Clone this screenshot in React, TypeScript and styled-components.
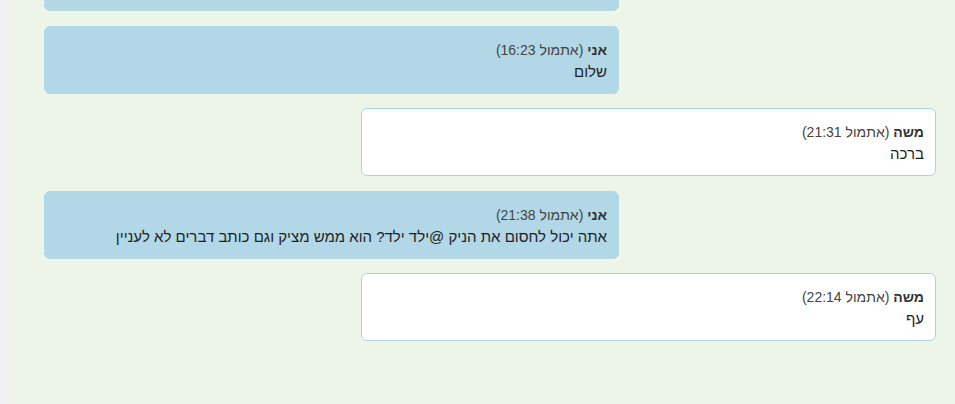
import React from 'react';
import styled, { createGlobalStyle } from 'styled-components';

const GlobalStyle = createGlobalStyle`
  html, body {
    margin: 0;
    padding: 0;
    height: 100%;
    overflow: hidden;
  }
  body {
    font-family: "Liberation Sans", Arial, sans-serif;
    background: #edf5e8;
  }
`;

const Page = styled.div`
  display: flex;
  height: 100vh;
`;

const SideStrip = styled.div`
  flex: 0 0 13px;
  background: linear-gradient(to right, #f1f1f1 75%, #edf5e8);
`;

const ChatArea = styled.div`
  flex: 1;
  display: flex;
  flex-direction: column;
  justify-content: flex-end;
  gap: 14.5px;
  padding: 0 19px 63px 31px;
  overflow: hidden;
  direction: rtl;
`;

// mine = blue on the left, others = white on the right
const Bubble = styled.div<{ $mine?: boolean }>`
  box-sizing: border-box;
  flex: 0 0 auto;
  width: 575px;
  height: 68px;
  padding: 13px 11px 12px;
  border-radius: 6px;
  align-self: ${(p) => (p.$mine ? 'flex-end' : 'flex-start')};
  background: ${(p) => (p.$mine ? '#b2d7e6' : '#ffffff')};
  border: 1px solid ${(p) => (p.$mine ? '#b2d7e6' : '#a9d3e6')};
  color: #222;
`;

const Header = styled.div`
  font-size: 14px;
  line-height: 21px;
  color: #444;
  b {
    color: #333;
  }
`;

const Text = styled.div`
  font-size: 15px;
  line-height: 22px;
  color: #1e1e1e;
`;

type Msg = { mine: boolean; name: string; time: string; text: string };

const messages: Msg[] = [
  { mine: true, name: 'אני', time: 'אתמול 16:20', text: 'היי' },
  { mine: true, name: 'אני', time: 'אתמול 16:23', text: 'שלום' },
  { mine: false, name: 'משה', time: 'אתמול 21:31', text: 'ברכה' },
  {
    mine: true,
    name: 'אני',
    time: 'אתמול 21:38',
    text: 'אתה יכול לחסום את הניק @ילד ילד? הוא ממש מציק וגם כותב דברים לא לעניין',
  },
  { mine: false, name: 'משה', time: 'אתמול 22:14', text: 'עף' },
];

const App = () => {
  return (
    <>
      <GlobalStyle />
      <Page>
        <SideStrip />
        <ChatArea>
          {messages.map((m, i) => (
            <Bubble key={i} $mine={m.mine}>
              <Header>
                <b>{m.name}</b> ({m.time})
              </Header>
              <Text>{m.text}</Text>
            </Bubble>
          ))}
        </ChatArea>
      </Page>
    </>
  );
};

export default App;
